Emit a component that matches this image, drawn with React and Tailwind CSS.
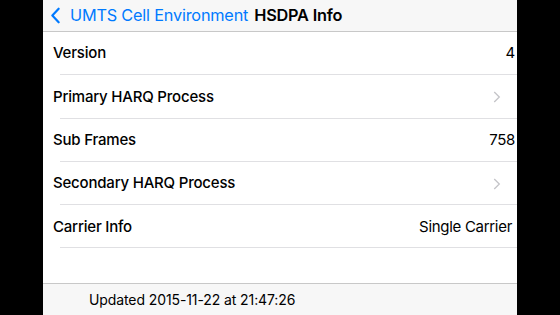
import React from "react";

const rows = [
  { label: "Version", value: "4" },
  { label: "Primary HARQ Process", chevron: true },
  { label: "Sub Frames", value: "758" },
  { label: "Secondary HARQ Process", chevron: true },
  { label: "Carrier Info", value: "Single Carrier", pad: true },
];

function Chevron({ className }) {
  return (
    <svg viewBox="0 0 8 13" className={className} fill="none" stroke="currentColor" strokeWidth="1.4">
      <path d="M1 1l5.5 5.5L1 12" />
    </svg>
  );
}

export default function App() {
  return (
    <div className="w-[560px] h-[315px] bg-black flex overflow-hidden" style={{ fontFamily: "Inter, 'Liberation Sans', sans-serif" }}>
      <div className="ml-[43px] w-[474px] h-full bg-white flex flex-col">
        <div className="h-[32px] bg-[#f7f7f7] border-b border-[#c8c8c8] flex items-center pl-[8px] shrink-0">
          <svg viewBox="0 0 10 18" className="w-[9px] h-[17px] text-[#007aff] mr-[10px]" fill="none" stroke="currentColor" strokeWidth="2.4" strokeLinecap="round" strokeLinejoin="round">
            <path d="M8.5 1.5L1.5 9l7 7.5" />
          </svg>
          <span className="text-[16.3px] text-[#007aff] tracking-[-0.2px]">UMTS Cell Environment</span>
          <span className="text-[16.3px] font-semibold text-black ml-[6px] tracking-[-0.2px]">HSDPA Info</span>
        </div>
        <div className="flex-1">
          {rows.map((r) => (
            <div key={r.label} className="h-[43.3px] flex items-center pl-[10px] relative">
              <span className="text-[15px] font-medium text-black flex-1 tracking-[-0.2px]">{r.label}</span>
              {r.value && (
                <span className={`text-[15px] text-black tracking-[-0.3px] ${r.pad ? "pr-[5px]" : "pr-[2px]"}`}>{r.value}</span>
              )}
              {r.chevron && <Chevron className="w-[8px] h-[12px] text-[#c4c4c8] mr-[16px]" />}
              <div className="absolute bottom-0 left-[17px] right-0 h-px bg-[#e0e0e3]" />
            </div>
          ))}
        </div>
        <div className="h-[32px] bg-[#f7f7f7] border-t border-[#c8c8c8] flex items-center pl-[46px] shrink-0">
          <span className="text-[14px] text-black tracking-[-0.1px]">Updated 2015-11-22 at 21:47:26</span>
        </div>
      </div>
    </div>
  );
}
